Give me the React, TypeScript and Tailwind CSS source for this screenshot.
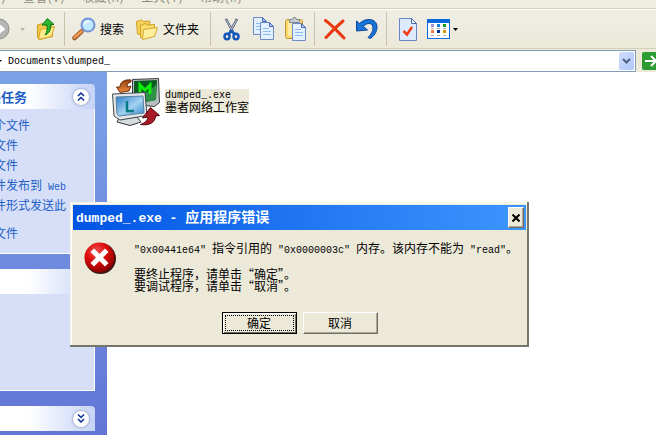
import type { ReactNode } from "react";

const MENUS = [
  { name: "编辑", letter: "E" },
  { name: "查看", letter: "V" },
  { name: "收藏", letter: "A" },
  { name: "工具", letter: "T" },
  { name: "帮助", letter: "H" },
];

const TASKS = ["个文件", "文件", "文件"];

function Latin({ children }: { children: ReactNode }) {
  return (
    <span className="font-['Liberation_Mono',monospace] text-[10px] leading-none whitespace-pre">
      {children}
    </span>
  );
}

function Divider() {
  return <div className="h-[34px] w-px bg-[#c5c2a8]" />;
}

function ToolButton({ label, className, children }: { label: string; className: string; children: ReactNode }) {
  return (
    <button aria-label={label} className={`flex shrink-0 items-center ${className}`}>
      {children}
    </button>
  );
}

function FolderUpIcon() {
  return (
    <svg width="20" height="24" viewBox="0 0 20 24">
      <path d="M1.500 8l5-1.500 2 2 7-1 1 12-13 3-2-2z" fill="#f3c94c" stroke="#c99a1c" />
      <path d="M4.500 12.500l14-3-3 10-13 3z" fill="#ffe98c" stroke="#d5a72b" />
      <path d="M11.500 1.500l6.500 6h-3.500c.5 5-1 9-5.500 10.500 2-3 2.500-6 2-10H6z" fill="#2fb432" stroke="#0b7a12" />
    </svg>
  );
}

function SearchIcon() {
  return (
    <svg width="24" height="24" viewBox="0 0 24 24">
      <path d="M2.500 21l7-6.500" stroke="#9a5a28" strokeWidth="4.500" strokeLinecap="round" />
      <path d="M2.500 20.500l7-6" stroke="#f09a54" strokeWidth="2.500" strokeLinecap="round" />
      <circle cx="16" cy="8" r="6.500" fill="#bfe9fd" stroke="#7393d8" strokeWidth="2" />
      <path d="M11.500 8c0-4 4.500-5 7-3-3 0-5 1-7 3z" fill="#fff" />
    </svg>
  );
}

function FoldersIcon() {
  return (
    <svg width="23" height="21" viewBox="0 0 23 21">
      <path d="M.5 2.500l5-1.500 2 1.500 6-.5 1 11-9 3-4-1z" fill="#f7d35c" stroke="#cf9f22" />
      <path d="M4.500 6l5-1.500 2 1.500 7-.5v11l-11 3-3-1z" fill="#f9dc6c" stroke="#cf9f22" />
      <path d="M7.500 10.500l14-2-3 9-12 3z" fill="#fff0a0" stroke="#d5a72b" />
    </svg>
  );
}

function CutIcon() {
  return (
    <svg width="17" height="23" viewBox="0 0 17 23" fill="none">
      <path d="M3 1l7 13M14 1L7 14" stroke="#4d5c78" strokeWidth="2.500" />
      <path d="M3.500 2l6 11M13.500 2L8 12" stroke="#c3cede" />
      <ellipse cx="4" cy="18.500" rx="2.500" ry="2.800" stroke="#1557b8" strokeWidth="2.500" />
      <ellipse cx="13" cy="18.500" rx="2.500" ry="2.800" stroke="#1557b8" strokeWidth="2.500" />
      <path d="M5.500 16l3-3 3 3" stroke="#1557b8" strokeWidth="2.500" />
    </svg>
  );
}

function Sheet({ x, y }: { x: number; y: number }) {
  return (
    <g transform={`translate(${x} ${y})`}>
      <path d="M.5.5h9l4 4v13H.5z" fill="#e3f0ff" stroke="#6d8cc6" />
      <path d="M9.500.5v4h4z" fill="#b7cdf0" stroke="#4469b0" />
      <path d="M3 6.500h6M3 9.500h8M3 12.500h8" stroke="#8bbcf3" />
    </g>
  );
}

function CopyIcon() {
  return (
    <svg width="22" height="24" viewBox="0 0 22 24">
      <Sheet x={0} y={0} />
      <Sheet x={7} y={5} />
    </svg>
  );
}

function PasteIcon() {
  return (
    <svg width="21" height="24" viewBox="0 0 21 24">
      <rect x=".5" y="2.500" width="17" height="19" rx="2" fill="#fbd968" stroke="#c29532" />
      <path d="M3 5h12v14H3z" fill="#ffeba3" />
      <path d="M4.500 5.500v-3h3l1-2h2l1 2h3v3z" fill="#c9ccd2" stroke="#81858d" />
      <Sheet x={7} y={6} />
    </svg>
  );
}

function DeleteIcon() {
  return (
    <svg width="22" height="21" viewBox="0 0 22 21" fill="none">
      <path d="M1.500 1.500C8 6 14 13 20 19" stroke="#e83a10" strokeWidth="3" strokeLinecap="round" />
      <path d="M19 2C13 7 7 13 2 18.500" stroke="#e83a10" strokeWidth="3" strokeLinecap="round" />
    </svg>
  );
}

function UndoIcon() {
  return (
    <svg width="22" height="20" viewBox="0 0 22 20">
      <path
        d="M.5 2l3 2.500C6 2 9 .5 13 .5c5 0 8 3 8 7.500 0 5-3 9-6.500 11.500l-2.500-1c3-3 5-6 5-9.500 0-3-1.500-4.500-4-4.500-2 0-4 1-5.500 3l4 3.500L.5 12z"
        fill="#1a74d8"
        stroke="#0b459c"
      />
    </svg>
  );
}

function PropertiesIcon() {
  return (
    <svg width="18" height="23" viewBox="0 0 18 23">
      <path d="M.5.5h12l5 5v17H.5z" fill="#ddeaff" stroke="#6885c5" />
      <path d="M12.500.5v5h5z" fill="#fff" stroke="#4769ae" />
      <path d="M4.500 13l3.500 3.500 5-7.500" fill="none" stroke="#f23c14" strokeWidth="2.500" />
    </svg>
  );
}

function ViewsIcon() {
  return (
    <svg width="23" height="20" viewBox="0 0 23 20">
      <rect x=".5" y=".5" width="22" height="19" fill="#fff" stroke="#0b6be0" />
      <path d="M0 0h23v4H0z" fill="#0967dc" />
      <path d="M4 5h3v3H4z" fill="#9a92cf" />
      <path d="M10 5h3v3h-3z" fill="#1582e0" />
      <path d="M16 5h3v3h-3z" fill="#109a16" />
      <path d="M4 11h3v3H4z" fill="#ff7a50" />
      <path d="M10 11h3v3h-3z" fill="#003399" />
      <path d="M16 11h3v3h-3z" fill="#cc9a00" />
      <path d="M4 9.500h3m3 0h3m3 0h3M4 16.500h3m3 0h3m3 0h3" stroke="#b2b2b2" />
    </svg>
  );
}

function MonitorsIcon() {
  return (
    <svg width="48" height="48" viewBox="0 0 48 48" className="shrink-0">
      <defs>
        <linearGradient id="blueScreen" x2="1" y2="1">
          <stop stopColor="#2a7cc6" />
          <stop offset=".55" stopColor="#a4d2f0" />
          <stop offset="1" stopColor="#2f86d0" />
        </linearGradient>
        <linearGradient id="orangeArrow" x2="0" y2="1">
          <stop stopColor="#8f4414" />
          <stop offset="1" stopColor="#f08a3c" />
        </linearGradient>
      </defs>
      <path d="M20.500 1.500l26-1 1 24-5 4-10-1-12-8z" fill="#b9c0c3" stroke="#363c40" />
      <path d="M22 3l23-1-1 20-10 2H22z" fill="#0b5b22" />
      <path d="M22 18c9-1 17-5 22.500-12L44 22l-10 2H22z" fill="#2f9146" />
      <path d="M28 16V7l5 5 5-5v9" fill="none" stroke="#0cf00c" strokeWidth="3" />
      <path d="M7 40l-2 4 13 3.500 11-3.500-4-5z" fill="#d6dbde" stroke="#33383c" />
      <path d="M.5 16l32.500-1.500 2 23L8 42l-6-4z" fill="#e4e8eb" stroke="#3f464b" />
      <path d="M4 19l27-1 1 17-25 3-2-2z" fill="url(#blueScreen)" stroke="#5b809b" />
      <path d="M15 23v10h7" fill="none" stroke="#077b83" strokeWidth="2.500" />
      <path
        d="M19 2C12 1 8 4.500 8 9H4.500l3.500 5.500 9-1.500 2-5-4 1c0-2.500 1-4.500 4-5z"
        fill="url(#orangeArrow)"
        stroke="#6e3010"
      />
      <path
        d="M38.500 29.500l9 8-4 .5c0 6-6 10-15 8.500 4-1.500 7-4 7.500-7.500l-5.500 1z"
        fill="#a81a24"
        stroke="#4c090f"
      />
    </svg>
  );
}

function ErrorIcon() {
  return (
    <svg width="34" height="34" viewBox="0 0 34 34" className="shrink-0">
      <defs>
        <radialGradient id="errorBall" cx=".4" cy=".3" r=".7">
          <stop stopColor="#f25050" />
          <stop offset=".5" stopColor="#dc0c0c" />
          <stop offset="1" stopColor="#8c0000" />
        </radialGradient>
      </defs>
      <circle cx="16.500" cy="16.500" r="15.500" fill="#3b1512" />
      <circle cx="15.500" cy="15.500" r="15" fill="url(#errorBall)" />
      <path d="M10 10l11 11M21 10L10 21" stroke="#fff" strokeWidth="5" strokeLinecap="square" />
    </svg>
  );
}

function Chevrons({ down }: { down?: boolean }) {
  return (
    <span className="flex size-4 items-center justify-center rounded-full bg-white shadow-[0_0_2px_1px_#a5b0d0]">
      <svg width="8" height="9" viewBox="0 0 8 9" fill="none" stroke="#0b2f9b" strokeWidth="1.500">
        <path d={down ? "M1 .5l3 3 3-3M1 5l3 3 3-3" : "M1 4l3-3 3 3M1 8.500l3-3 3 3"} />
      </svg>
    </span>
  );
}

function PanelHeader({ title, toggle }: { title?: string; toggle?: ReactNode }) {
  return (
    <div className="flex h-[25px] items-center justify-between rounded-tr bg-linear-to-r from-white from-30% to-[#c6d3f7] pr-[6px]">
      <h2 className="-ml-3 text-[13px] font-bold text-[#215dc6]">{title}</h2>
      {toggle}
    </div>
  );
}

function Sidebar() {
  return (
    <aside className="w-[107px] shrink-0 overflow-hidden bg-linear-to-b from-[#7ba2e7] to-[#6375d6] pt-3 pr-3 whitespace-nowrap">
      <section>
        <PanelHeader
          title="夹任务"
          toggle={<button aria-label="收起"><Chevrons /></button>}
        />
        <div className="h-[145px] border-r border-b border-white bg-[#d6dff7] pt-[6px] text-[#215dc6]">
          <ul className="-ml-[6px] leading-5">
            {TASKS.map((task, i) => (
              <li key={i}><a href="#">{task}</a></li>
            ))}
            <li><a href="#">件发布到<Latin> Web</Latin></a></li>
            <li><a href="#">件形式发送此</a></li>
            <li className="mt-2"><a href="#">文件</a></li>
          </ul>
        </div>
      </section>
      <section className="mt-[15px]">
        <PanelHeader />
        <div className="h-[97px] border-r border-b border-white bg-[#d6dff7]" />
      </section>
      <section className="mt-[15px]">
        <PanelHeader toggle={<button aria-label="展开"><Chevrons down /></button>} />
      </section>
    </aside>
  );
}

function Toolbar() {
  return (
    <div className="flex h-[39px] items-center overflow-hidden border-t border-white bg-linear-to-b from-[#efeee6] to-[#ece9d8]">
      <ToolButton label="前进" className="w-9 gap-[10px]">
        <svg width="10" height="22" viewBox="0 0 10 22">
          <circle cx="-1" cy="11" r="10" fill="#b5b5b3" stroke="#8e8e8c" />
          <path d="M-3 6l6 5-6 5" fill="none" stroke="#fff" strokeWidth="3" />
        </svg>
        <svg width="5" height="3" viewBox="0 0 5 3"><path d="M0 0h5L2.500 3z" fill="#b8b5a5" /></svg>
      </ToolButton>
      <ToolButton label="向上" className="w-7"><FolderUpIcon /></ToolButton>
      <Divider />
      <ToolButton label="搜索" className="w-[71px] gap-1 pl-[7px] whitespace-nowrap">
        <SearchIcon />
        搜索
      </ToolButton>
      <ToolButton label="文件夹" className="w-[74px] gap-1 whitespace-nowrap">
        <FoldersIcon />
        文件夹
      </ToolButton>
      <Divider />
      <ToolButton label="剪切" className="w-8 pl-3"><CutIcon /></ToolButton>
      <ToolButton label="复制" className="w-[42px] pl-[10px]"><CopyIcon /></ToolButton>
      <ToolButton label="粘贴" className="w-[29px]"><PasteIcon /></ToolButton>
      <Divider />
      <ToolButton label="删除" className="w-[41px] pl-[9px]"><DeleteIcon /></ToolButton>
      <ToolButton label="撤消" className="w-[30px]"><UndoIcon /></ToolButton>
      <Divider />
      <ToolButton label="属性" className="w-10 pl-3"><PropertiesIcon /></ToolButton>
      <ToolButton label="查看方式" className="gap-[3px]">
        <ViewsIcon />
        <svg width="5" height="3" viewBox="0 0 5 3"><path d="M0 0h5L2.500 3z" fill="#000" /></svg>
      </ToolButton>
    </div>
  );
}

function AddressBar() {
  return (
    <div className="flex h-[22px]">
      <div className="flex flex-1 items-center border border-l-0 border-[#7f9db9] bg-white pr-px">
        <svg width="3" height="3" viewBox="0 0 3 3"><path d="M0 0h2L0 2z" fill="#000" /></svg>
        <input
          aria-label="地址"
          defaultValue="Documents\dumped_"
          className="ml-[5px] min-w-0 flex-1 font-['Liberation_Mono',monospace] text-[10px] text-black outline-none"
        />
        <button aria-label="显示地址列表" className="flex h-[18px] w-[15px] items-center justify-center rounded-xs bg-linear-to-br from-[#d0dcfc] to-[#b0c7fa]">
          <svg width="9" height="6" viewBox="0 0 9 6"><path d="M1 1l3.500 3.500L8 1" fill="none" stroke="#4d6185" strokeWidth="2" /></svg>
        </button>
      </div>
      <button aria-label="转到" className="flex w-5 items-center overflow-hidden pl-[6px]">
        <svg width="19" height="18" viewBox="0 0 19 18" className="shrink-0">
          <rect width="19" height="18" rx="2" fill="#2b9c33" />
          <path d="M3 9h11M9 4l5 5-5 5" fill="none" stroke="#fff" strokeWidth="2" />
        </svg>
      </button>
    </div>
  );
}

function ErrorDialog() {
  return (
    <div
      role="dialog"
      aria-labelledby="dialog-title"
      className="absolute top-[202px] left-[70px] w-[459px] border-r-2 border-b-2 border-[#77756a] bg-[#ece9d8] pt-[3px] pr-px pb-[11px] pl-[3px] shadow-[inset_1px_1px_#f5f3e6,inset_2px_2px_#fff]"
    >
      <div className="flex h-[25px] items-center justify-between bg-linear-to-r from-[#0054e3] to-[#3d95ff] pr-[2px] pl-[3px]">
        <h1 id="dialog-title" className="text-[14px] font-bold text-white">
          <span className="font-['Liberation_Mono',monospace] text-[13px] whitespace-pre">dumped_.exe - </span>
          应用程序错误
        </h1>
        <button
          aria-label="关闭"
          className="flex h-[21px] w-4 items-center justify-center border border-t-white border-r-[#716f64] border-b-[#716f64] border-l-white bg-[#ece9d8] shadow-[inset_-1px_-1px_#aca899]"
        >
          <svg width="8" height="8" viewBox="0 0 8 8"><path d="M.5.5l7 7m0-7l-7 7" stroke="#000" strokeWidth="2" /></svg>
        </button>
      </div>
      <div className="flex gap-4 pt-3 pl-[11px]">
        <ErrorIcon />
        <div className="leading-3 whitespace-nowrap text-black">
          <p>
            <Latin>"0x00441e64" </Latin>指令引用的<Latin> "0x0000003c" </Latin>内存。该内存不能为<Latin> "read"</Latin>。
          </p>
          <p className="mt-3">要终止程序，请单击“确定”。</p>
          <p>要调试程序，请单击“取消”。</p>
        </div>
      </div>
      <div className="mt-5 flex justify-center gap-[6px]">
        <button className="h-[22px] w-[75px] border border-black bg-[#ece9d8] p-[2px] shadow-[inset_1px_1px_#fff,inset_-1px_-1px_#716f64]">
          <span className="flex h-full items-center justify-center border border-dotted border-black">确定</span>
        </button>
        <button className="h-[22px] w-[75px] border border-t-white border-r-[#716f64] border-b-[#716f64] border-l-white bg-[#ece9d8] leading-4 shadow-[inset_-1px_-1px_#aca899]">
          取消
        </button>
      </div>
    </div>
  );
}

export default function App() {
  return (
    <div className="relative flex h-screen flex-col overflow-hidden bg-white font-['Noto_Sans_CJK_SC',sans-serif] text-[12px] text-black">
      <header className="shrink-0 bg-[#ece9d8]">
        <nav className="h-[9px] overflow-hidden border-b border-[#d5d1b8] bg-[#efedde] pb-[3px] text-[#8d8b80]">
          <div className="-ml-9 flex h-full items-end gap-[17px]">
            {MENUS.map((menu) => (
              <button key={menu.name} className="shrink-0 leading-3">
                {menu.name}<Latin>({menu.letter})</Latin>
              </button>
            ))}
          </div>
        </nav>
        <Toolbar />
        <div className="mb-px h-px bg-[#d5d1b8]" />
        <AddressBar />
      </header>
      <main className="flex min-h-0 flex-1">
        <Sidebar />
        <div className="flex-1 pt-[6px] pl-[5px]">
          <button className="flex gap-[5px] text-left">
            <MonitorsIcon />
            <span className="mt-[11px] flex h-6 flex-col bg-[#ece9d8] leading-3">
              <span className="flex h-3 items-end"><Latin>dumped_.exe</Latin></span>
              <span className="leading-[11px]">墨者网络工作室</span>
            </span>
          </button>
        </div>
      </main>
      <ErrorDialog />
    </div>
  );
}
